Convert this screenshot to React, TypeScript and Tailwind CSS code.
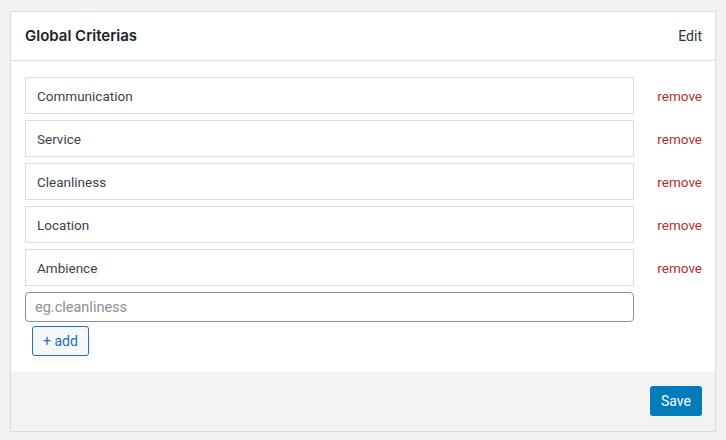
import React from "react";

const items = ["Communication", "Service", "Cleanliness", "Location", "Ambience"];

export default function App() {
  return (
    <div className="min-h-[440px] w-[726px] bg-[#f1f1f1] pt-[11px] pl-[10px] pr-[10px]" style={{ fontFamily: "Roboto, 'Liberation Sans', sans-serif" }}>
      <div className="w-[706px] border border-[#dcdcde] bg-white">
        <div className="flex h-[49px] items-center justify-between border-b border-[#dcdcde] pl-[14px] pr-[13px]">
          <span className="text-[15px] font-semibold text-[#1d2327]" style={{ fontFamily: "Inter, Roboto, sans-serif" }}>Global Criterias</span>
          <span className="text-[14px] text-[#2c3338]">Edit</span>
        </div>
        <div className="pl-[14px] pr-[13px] pt-[16px] pb-[15px]">
          <div className="flex flex-col gap-[6px]">
            {items.map((it) => (
              <div key={it} className="flex items-center">
                <div className="flex h-[37px] w-[609px] items-center border border-[#dcdcde] pl-[11px] pt-[2px] text-[13.5px] text-[#3c434a]">{it}</div>
                <span className="ml-auto pt-[1px] text-[13.5px] text-[#b32d2e]">remove</span>
              </div>
            ))}
          </div>
          <div className="mt-[6px] flex h-[30px] w-[609px] items-center rounded-[4px] border border-[#8c8f94] pl-[9px] pt-[1px] text-[14.5px] text-[#8c8f94]">eg.cleanliness</div>
          <button className="ml-[7px] mt-[4px] flex h-[30px] w-[57px] items-center justify-center rounded-[3px] border border-[#2271b1] bg-[#f6f7f7] text-[14px] text-[#2271b1]">+ add</button>
        </div>
        <div className="flex h-[60px] items-center justify-end bg-[#f3f3f3] pr-[13px]">
          <button className="flex h-[30px] w-[52px] items-center justify-center rounded-[3px] bg-[#007cba] text-[14px] text-white">Save</button>
        </div>
      </div>
    </div>
  );
}
